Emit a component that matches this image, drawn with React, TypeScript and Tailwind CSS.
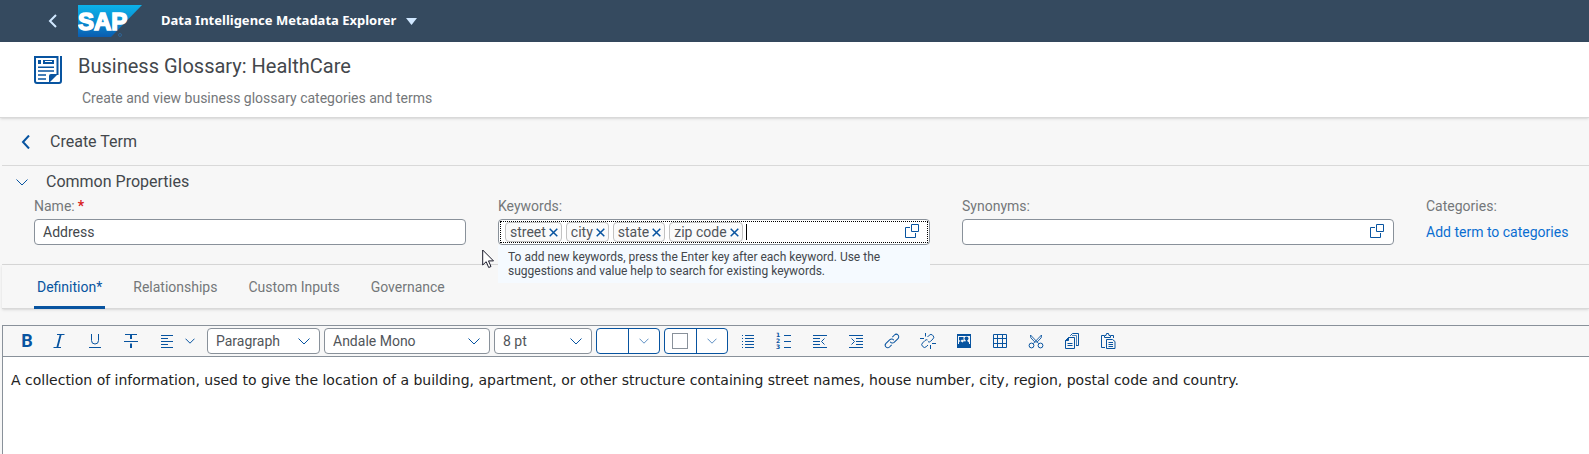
import { useState, type ReactNode } from "react";

function Svg({ children, size = 16, className = "" }: { children: ReactNode; size?: number; className?: string }) {
  return (
    <svg
      width={size}
      height={size}
      viewBox={`0 0 ${size} ${size}`}
      fill="none"
      stroke="currentColor"
      strokeWidth="1"
      aria-hidden="true"
      className={`shrink-0 overflow-visible ${className}`}
    >
      {children}
    </svg>
  );
}

function Chevron({ className = "" }: { className?: string }) {
  return (
    <svg width="12" height="7" viewBox="0 0 12 7" fill="none" stroke="currentColor" strokeWidth="1" aria-hidden="true" className={className}>
      <path d="M.5.500L6 6l5.500-5.500" />
    </svg>
  );
}

function SmallChevron({ className = "" }: { className?: string }) {
  return (
    <svg width="10" height="6" viewBox="0 0 10 6" fill="none" stroke="currentColor" strokeWidth="1" aria-hidden="true" className={className}>
      <path d="M.5.700L5 5.200 9.500.700" />
    </svg>
  );
}

function SapLogo() {
  return (
    <svg width="64" height="32" viewBox="0 0 64 32" role="img" aria-label="SAP" className="shrink-0">
      <defs>
        <linearGradient id="sap-blue" x1="0" y1="0" x2="0" y2="1">
          <stop offset="0" stopColor="#0cb2ea" />
          <stop offset="0.5" stopColor="#0a8ed2" />
          <stop offset="1" stopColor="#0a5cb0" />
        </linearGradient>
      </defs>
      <path d="M0 0h64L33 32H0z" fill="url(#sap-blue)" />
      <text
        x="0"
        y="25"
        fontFamily="'Liberation Sans', Arial, sans-serif"
        fontWeight="700"
        fontSize="24"
        fill="#fff"
        stroke="#fff"
        strokeWidth="1.500"
      >
        SAP
      </text>
      <circle cx="42" cy="30" r="1.500" fill="none" stroke="#2f6aa0" strokeWidth="0.800" />
    </svg>
  );
}

function ValueHelpIcon() {
  return (
    <Svg>
      <path d="M7.500.500h7v7h-7z" />
      <path d="M6 3.500H1.500v10h10V9" />
    </Svg>
  );
}

const toolbarIcons: { label: string; icon: ReactNode }[] = [
  {
    label: "Bullet list",
    icon: (
      <Svg>
        <path d="M5 2.500h9M5 5.500h9M5 8.500h9M5 11.500h9M5 14.500h9" />
        <path d="M2 2.500h1M2 5.500h1M2 8.500h1M2 11.500h1M2 14.500h1" />
      </Svg>
    ),
  },
  {
    label: "Numbered list",
    icon: (
      <Svg>
        <path d="M8 2.500h7M8 8.500h7M8 14.500h7" />
        <g fill="currentColor" stroke="none" fontFamily="'DejaVu Sans', sans-serif" fontWeight="700" fontSize="6">
          <text x="0" y="4">1</text>
          <text x="0" y="10">2</text>
          <text x="0" y="16">3</text>
        </g>
      </Svg>
    ),
  },
  {
    label: "Outdent",
    icon: (
      <Svg>
        <path d="M1 2.500h14M1 5.500h7M1 8.500h7M1 11.500h7M1 14.500h14" />
        <path d="M12.500 5.500l-3 3 3 3" />
      </Svg>
    ),
  },
  {
    label: "Indent",
    icon: (
      <Svg>
        <path d="M1 2.500h14M8 5.500h7M8 8.500h7M8 11.500h7M1 14.500h14" />
        <path d="M3.500 5.500l3 3-3 3" />
      </Svg>
    ),
  },
  {
    label: "Insert link",
    icon: (
      <Svg>
        <g transform="rotate(-45 8 8)">
          <path d="M5 10.500H2a2.500 2.500 0 0 1 0-5h5.500a2.500 2.500 0 0 1 2.300 3.200" />
          <path d="M11 5.500h3a2.500 2.500 0 0 1 0 5H8.500a2.500 2.500 0 0 1-2.300-3.200" />
        </g>
      </Svg>
    ),
  },
  {
    label: "Remove link",
    icon: (
      <Svg>
        <path d="M7.500 4l1.800-1.800a2.300 2.300 0 0 1 3.300 0l.4.400a2.300 2.300 0 0 1 0 3.300L10.500 8.400a2 2 0 0 1-2.500.300" />
        <path d="M7.500 7a2 2 0 0 0-2.500.500L2.500 10a2.300 2.300 0 0 0 0 3.300l.4.400a2.300 2.300 0 0 0 3.300 0L8 12" />
        <path d="M5.500 0v3.500M0 5.500h4M12 10.500h4M10.500 12v4" />
      </Svg>
    ),
  },
  {
    label: "Insert image",
    icon: (
      <Svg>
        <path d="M1 1h14v14H1z" fill="currentColor" stroke="none" />
        <path d="M2 3h12v8H2z" fill="#f7f7f7" stroke="none" />
        <path d="M3 4h4.500v3.500L6 6.500 4.500 8 3 7zM3 11V9l1.500-1 2 1.500L8 8l2 1.500V11z" fill="currentColor" stroke="none" />
        <circle cx="10.500" cy="5.500" r="2" fill="currentColor" stroke="none" />
        <path d="M8 11V9.500L9.800 8V7h1.400v1L13 9.500V11z" fill="currentColor" stroke="none" />
      </Svg>
    ),
  },
  {
    label: "Insert table",
    icon: (
      <Svg>
        <path d="M1.500 1.500h13v13h-13zM1.500 5.500h13M1.500 10.500h13M5.500 1.500v13M10.500 1.500v13" />
      </Svg>
    ),
  },
  {
    label: "Cut",
    icon: (
      <Svg>
        <circle cx="3.500" cy="12.500" r="2.400" />
        <circle cx="12.500" cy="12.500" r="2.400" />
        <path d="M2.500 2l8.300 8.700M13.500 2l-8.300 8.700M2.500 2l.3 2.800 4.500 4.700M13.500 2l-.3 2.800-4.500 4.700" strokeWidth="0.900" />
      </Svg>
    ),
  },
  {
    label: "Copy",
    icon: (
      <Svg>
        <path d="M4.500 4.500h6v11h-9v-8z" />
        <path d="M1.500 7.500l3-3v3z" fill="currentColor" />
        <path d="M6.500 3V2.500l2-2h6v12H12" />
        <path d="M8 2.500h4.500v10" strokeWidth="0.700" />
        <path d="M3.500 10.500h5M3.500 12.500h5" />
      </Svg>
    ),
  },
  {
    label: "Paste",
    icon: (
      <Svg>
        <path d="M5 14.500H1.500v-12H4M11 2.500h2.500V5" />
        <path d="M4.500 4.500v-2h1.500l.5-2h2l.5 2h1.500v2z" />
        <path d="M6.500 6.500h6l2.500 2v7H6.500zM8.500 9.500h4.500M8.500 11.500h4.500M8.500 13.500h4.500" />
      </Svg>
    ),
  },
];

function Dropdown({ label, value, className }: { label: string; value: string; className: string }) {
  return (
    <div className={`relative shrink-0 ${className}`}>
      <select
        aria-label={label}
        defaultValue={value}
        className="block h-[26px] w-full appearance-none rounded-sm border border-[#89919a] bg-white pl-2 pr-7 text-sm text-[#51555a] outline-none"
      >
        <option>{value}</option>
      </select>
      <Chevron className="pointer-events-none absolute right-[10px] top-[10px] text-[#0854a0]" />
    </div>
  );
}

function SplitButton({ label, children }: { label: string; children?: ReactNode }) {
  return (
    <div className="flex h-[26px] w-16 shrink-0 overflow-hidden rounded border border-[#0854a0] bg-white">
      <button type="button" aria-label={label} className="flex flex-1 items-center justify-center border-r border-[#0854a0]">
        {children}
      </button>
      <button type="button" aria-label={`${label} options`} className="flex flex-1 items-center justify-center text-[#5f90c4]">
        <SmallChevron />
      </button>
    </div>
  );
}

function EditorToolbar() {
  const button = "flex size-8 shrink-0 items-center justify-center";
  return (
    <div role="toolbar" aria-label="Formatting" className="flex h-[31px] items-center gap-1 border-b border-[#89919a] bg-[#f7f7f7] pl-2 text-[#0854a0]">
      <div className="flex">
        <button type="button" aria-label="Bold" className={`${button} text-lg font-bold`}>B</button>
        <button type="button" aria-label="Italic" className={button}>
          <Svg>
            <path d="M6 1.500h7.500M2.500 14.500H10" />
            <path d="M9.700 1.500L6.300 14.500" strokeWidth="1.800" />
          </Svg>
        </button>
      </div>
      <button type="button" aria-label="Underline" className={button}>
        <Svg>
          <path d="M4.500 1v6.500a3.500 3.500 0 0 0 7 0V1M2 14.500h12" />
        </Svg>
      </button>
      <button type="button" aria-label="Strikethrough" className={button}>
        <Svg>
          <path d="M2 1.500h12M1 8.500h14" />
          <path d="M8 1.500V6M8 10.500V15" strokeWidth="2" />
        </Svg>
      </button>
      <button type="button" aria-label="Alignment" className="flex h-8 w-[52px] shrink-0 items-center gap-[10px] pl-2">
        <Svg>
          <path d="M2 2.500h12M2 5.500h7M2 8.500h12M2 11.500h7M2 14.500h12" />
        </Svg>
        <SmallChevron className="shrink-0" />
      </button>
      <Dropdown label="Block format" value="Paragraph" className="w-[113px]" />
      <Dropdown label="Font family" value="Andale Mono" className="w-[166px]" />
      <Dropdown label="Font size" value="8 pt" className="w-[98px]" />
      <SplitButton label="Text color" />
      <SplitButton label="Background color">
        <span className="size-4 border border-[#89919a]" />
      </SplitButton>
      {toolbarIcons.map(({ label, icon }) => (
        <button key={label} type="button" aria-label={label} className={button}>
          {icon}
        </button>
      ))}
    </div>
  );
}

function Token({ text }: { text: string }) {
  return (
    <span className="flex h-5 shrink-0 items-center gap-[3px] rounded border border-[#c2c2c2] bg-[#fafafa] pl-1 pr-[3px] text-sm text-[#51555a]">
      {text}
      <button type="button" aria-label={`Remove ${text}`} className="text-[#0854a0]">
        <svg width="9" height="9" viewBox="0 0 9 9" fill="none" stroke="currentColor" strokeWidth="1.500" aria-hidden="true">
          <path d="M.7.700l7.600 7.600M8.300.700L.700 8.300" />
        </svg>
      </button>
    </span>
  );
}

function Pointer() {
  return (
    <svg width="13" height="20" viewBox="0 0 13 20" aria-hidden="true" className="absolute -left-4 top-1">
      <path d="M.7 1v15l3.500-3.300 2.500 5.800 2.300-1-2.500-5.600h5z" fill="#fff" stroke="#1a1a2a" strokeWidth="1" />
    </svg>
  );
}

const tabs = ["Definition*", "Relationships", "Custom Inputs", "Governance"];
const fieldLabel = "block h-[17px] text-sm leading-4 text-[#74777a]";

export default function App() {
  const [tab, setTab] = useState(tabs[0]);
  return (
    <div className="flex min-h-screen flex-col bg-[#f7f7f7] font-[Roboto,sans-serif] text-[#43474c]">
      <header className="flex h-[42px] shrink-0 items-center bg-[#354a5f] pl-12">
        <button type="button" aria-label="Back" className="mr-[21px] text-[#d1e8ff]">
          <svg width="9" height="14" viewBox="0 0 9 14" fill="none" stroke="currentColor" strokeWidth="2" aria-hidden="true">
            <path d="M8 1L2 7l6 6" />
          </svg>
        </button>
        <SapLogo />
        <button type="button" className="ml-[19px] flex items-center gap-[10px] font-['Noto_Sans',sans-serif] text-[13px] font-bold text-white">
          Data Intelligence Metadata Explorer
          <svg width="11" height="7" viewBox="0 0 11 7" fill="#d1e8ff" aria-hidden="true">
            <path d="M0 0h11L5.500 7z" />
          </svg>
        </button>
      </header>

      <section className="flex h-[76px] shrink-0 gap-4 border-b border-[#d9d9d9] bg-white pl-[34px] pt-[14px] shadow-sm">
        <svg width="28" height="28" viewBox="0 0 28 28" fill="none" stroke="#0854a0" strokeWidth="2" aria-hidden="true" className="shrink-0">
          <path d="M25 27H3a2 2 0 0 1-2-2V1h22.500v18M27 0v25a2 2 0 0 1-2 2" />
          <path d="M4 6h3M9 6h11" strokeWidth="4" />
          <path d="M11 5.500h7" stroke="#fff" strokeWidth="1" />
          <path d="M4 11.200h16M4 15h16M4 19h8M4 23h8" strokeWidth="1.600" />
          <path d="M24 18l-9 9v-7a2 2 0 0 1 2-2z" fill="#0854a0" stroke="none" />
        </svg>
        <div>
          <h1 className="text-xl leading-5">Business Glossary: HealthCare</h1>
          <p className="pl-1 pt-[14px] text-sm leading-4 text-[#74777a]">Create and view business glossary categories and terms</p>
        </div>
      </section>

      <main className="flex flex-1 flex-col pl-[2px]">
        <div className="flex h-12 shrink-0 items-center gap-5 border-b border-[#d9d9d9] pl-[19px]">
          <button type="button" aria-label="Back to glossary" className="text-[#0854a0]">
            <svg width="9" height="14" viewBox="0 0 9 14" fill="none" stroke="currentColor" strokeWidth="2" aria-hidden="true">
              <path d="M8 .500L2 7l6 6.500" />
            </svg>
          </button>
          <h2 className="text-base">Create Term</h2>
        </div>

        <section className="h-[99px] shrink-0 border-b border-[#d9d9d9]">
          <h3 className="flex h-8 items-center pl-[14px] text-base">
            <button type="button" aria-label="Collapse common properties" className="mr-[18px] text-[#0854a0]">
              <Chevron />
            </button>
            Common Properties
          </h3>
          <div className="flex gap-8 pl-8">
            <div className="min-w-0 flex-1">
              <label htmlFor="name" className={fieldLabel}>
                Name:<span className="pl-[3px] font-bold text-[#d92020]">*</span>
              </label>
              <input
                id="name"
                defaultValue="Address"
                className="mt-1 block h-[26px] w-full rounded-sm border border-[#89919a] bg-white px-2 text-sm outline-none"
              />
            </div>
            <div className="relative min-w-0 flex-1">
              <label htmlFor="keywords" className={fieldLabel}>Keywords:</label>
              <div className="mt-1 h-[26px] rounded-sm border border-[#89919a] bg-white p-px">
                <div className="flex h-full items-center gap-1 border border-dotted border-black pl-1 pr-[7px]">
                  <Token text="street" />
                  <Token text="city" />
                  <Token text="state" />
                  <Token text="zip code" />
                  <span className="-mx-px h-4 w-px bg-black" />
                  <input id="keywords" className="min-w-0 flex-1 bg-transparent text-sm outline-none" />
                  <button type="button" aria-label="Keyword value help" className="text-[#0854a0]">
                    <ValueHelpIcon />
                  </button>
                </div>
              </div>
              <div role="tooltip" className="absolute left-0 top-[47px] z-10 h-[38px] w-full bg-[#f5faff] px-[10px] pt-[5px] text-xs leading-[14px]">
                To add new keywords, press the Enter key after each keyword. Use the suggestions and value help to search for existing keywords.
                <Pointer />
              </div>
            </div>
            <div className="min-w-0 flex-1">
              <label htmlFor="synonyms" className={fieldLabel}>Synonyms:</label>
              <div className="mt-1 flex h-[26px] items-center rounded-sm border border-[#89919a] bg-white pr-2">
                <input id="synonyms" className="min-w-0 flex-1 bg-transparent px-2 text-sm outline-none" />
                <button type="button" aria-label="Synonym value help" className="text-[#0854a0]">
                  <ValueHelpIcon />
                </button>
              </div>
            </div>
            <div className="w-[163px] shrink-0">
              <span className={fieldLabel}>Categories:</span>
              <a href="#categories" className="mt-1 flex h-[26px] items-center text-sm text-[#0a6ed1]">Add term to categories</a>
            </div>
          </div>
        </section>

        <div role="tablist" className="flex h-11 shrink-0 gap-[25px] border-b border-[#d9d9d9] pl-8 shadow-sm">
          {tabs.map((name) => (
            <button
              key={name}
              type="button"
              role="tab"
              aria-selected={tab === name}
              onClick={() => setTab(name)}
              className={`-mb-px border-b-[3px] px-[3px] pt-[2px] text-sm ${
                tab === name ? "border-[#0854a0] text-[#0854a0]" : "border-transparent text-[#74777a]"
              }`}
            >
              {name}
            </button>
          ))}
        </div>

        <div className="mt-4 flex flex-1 flex-col border-l border-t border-[#89919a] bg-white">
          <EditorToolbar />
          <textarea
            aria-label="Definition"
            defaultValue="A collection of information, used to give the location of a building, apartment, or other structure containing street names, house number, city, region, postal code and country."
            className="w-full flex-1 resize-none bg-white px-2 pt-[13px] font-['DejaVu_Sans',Verdana,sans-serif] text-sm leading-5 text-[#222] outline-none"
          />
        </div>
      </main>
    </div>
  );
}
